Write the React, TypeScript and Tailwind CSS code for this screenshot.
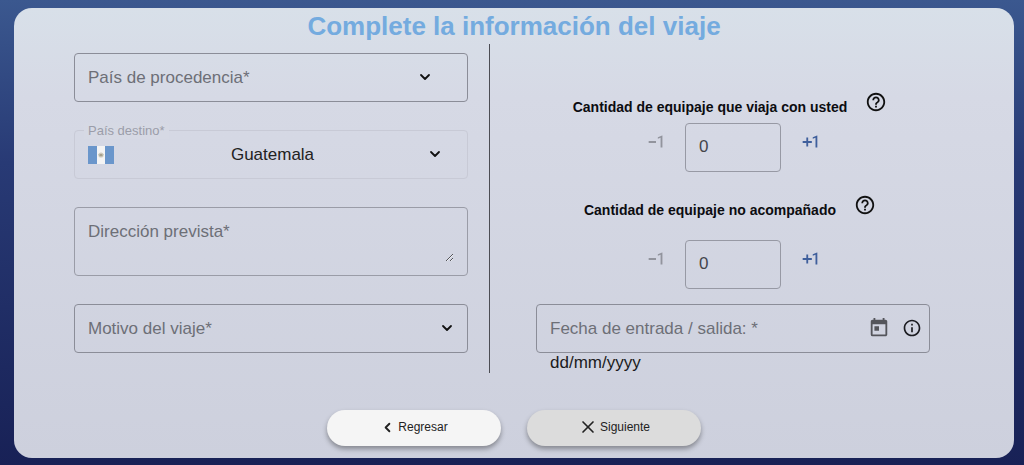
import type { ReactNode } from "react";
import clsx from "clsx";
import { ChevronDown, ChevronLeft, X } from "lucide-react";
import {
  MdExposureNeg1,
  MdExposurePlus1,
  MdHelpOutline,
  MdInfoOutline,
  MdToday,
} from "react-icons/md";

const FlagGuatemala = () => (
  <svg
    width="26"
    height="18"
    viewBox="0 0 26 18"
    className="pointer-events-none absolute top-4 left-[14px]"
  >
    <rect width="26" height="18" fill="#6a96cb" />
    <rect x="9" width="8" height="18" fill="#f4f4f4" />
    <circle cx="13" cy="9" r="2.6" fill="#cfcabd" />
    <path d="M11 8.5a2.2 2.2 0 0 0 4 0" fill="none" stroke="#8f9c86" strokeWidth="1" />
    <rect x="12" y="8" width="2" height="2" fill="#a8a08c" />
  </svg>
);

const Arrow = ({ className }: { className: string }) => (
  <ChevronDown
    size={16}
    strokeWidth={2.7}
    className={clsx("pointer-events-none absolute top-4 text-[#111]", className)}
  />
);

type FieldProps = {
  id: string;
  label: string;
  floating?: boolean;
  children: ReactNode;
};

const Field = ({ id, label, floating, children }: FieldProps) => (
  <div className="relative text-[17px]">
    {children}
    <label
      htmlFor={id}
      className={clsx(
        "pointer-events-none absolute",
        floating
          ? "-top-[7px] left-[10px] bg-[#d6d9e4] px-1 text-[13px] leading-4 text-[#9b9da9]"
          : "top-[13px] left-[14px] leading-6 text-[#6d6f77]"
      )}
    >
      {label}
    </label>
  </div>
);

type StepperProps = {
  id: string;
  label: string;
  className: string;
};

const Stepper = ({ id, label, className }: StepperProps) => (
  <div className={clsx("flex flex-col items-center", className)}>
    <div className="flex items-center">
      <label htmlFor={id} className="pt-2 text-[14px] leading-5 font-bold text-[#0c0c10]">
        {label}
      </label>
      <button type="button" aria-label="Ayuda" className="pr-[6px] pb-[2px] pl-[18px] text-[#111]">
        <MdHelpOutline size={22} />
      </button>
    </div>
    <div className="flex items-start gap-[10px]">
      <button type="button" aria-label="Restar uno" className="p-2 text-[#92949d]">
        <MdExposureNeg1 size={22} />
      </button>
      <input
        id={id}
        type="text"
        defaultValue="0"
        className="h-[49px] w-24 rounded border border-[#9799a4] px-[13px] pb-[2px] text-[17px] text-[#44454b]"
      />
      <button type="button" aria-label="Sumar uno" className="p-2 text-[#3f5f9c]">
        <MdExposurePlus1 size={22} />
      </button>
    </div>
  </div>
);

export default function App() {
  return (
    <main className="min-h-screen bg-linear-to-b from-[#3b588f] via-[#283a75] via-35% to-[#182156] pt-2 pr-[10px] pb-[7px] pl-[14px] font-['Liberation_Sans',Arial,sans-serif]">
      <form className="rounded-[18px] bg-linear-to-b from-[#d8e0e9] via-[#d6d9e5] via-20% to-[#cdd0dd] pb-3">
        <h1 className="text-center text-[26px] leading-9 font-bold text-[#74abdf]">
          Complete la información del viaje
        </h1>
        <div className="grid grid-cols-[475fr_525fr]">
          <div className="flex flex-col gap-7 pt-[9px] pr-[21px] pb-5 pl-[60px]">
            <Field id="origen" label="País de procedencia*">
              <select
                id="origen"
                className="block h-[49px] w-full appearance-none rounded border border-[#8b8d98] px-[13px]"
              />
              <Arrow className="right-[35px]" />
            </Field>
            <Field id="destino" label="País destino*" floating>
              <FlagGuatemala />
              <select
                id="destino"
                disabled
                className="block h-[49px] w-full appearance-none rounded border border-[#c8cad6] pr-[13px] pl-4 text-center text-[#222] opacity-100"
              >
                <option>Guatemala</option>
              </select>
              <Arrow className="right-[25px]" />
            </Field>
            <Field id="direccion" label="Dirección prevista*">
              <div className="h-[69px] rounded border border-[#9a9ca7] px-[13px] pt-3 pb-[13px]">
                <textarea id="direccion" className="block h-full w-full resize-y" />
              </div>
            </Field>
            <Field id="motivo" label="Motivo del viaje*">
              <select
                id="motivo"
                className="block h-[49px] w-full appearance-none rounded border border-[#8b8d98] px-[13px]"
              />
              <Arrow className="right-[13px]" />
            </Field>
          </div>
          <div className="flex flex-col border-l border-[#4c4d54] pr-[84px] pl-[46px]">
            <Stepper
              id="equipaje"
              label="Cantidad de equipaje que viaja con usted"
              className="gap-[6px] pt-[45px]"
            />
            <Stepper
              id="no-acompanado"
              label="Cantidad de equipaje no acompañado"
              className="gap-5 pt-5 pb-[15px]"
            />
            <Field id="fecha" label="Fecha de entrada / salida: *">
              <input
                id="fecha"
                type="text"
                aria-describedby="formato"
                className="block h-[49px] w-full rounded border border-[#8b8d98] px-[13px]"
              />
              <div className="absolute top-[13px] right-2 flex items-center gap-3">
                <button type="button" aria-label="Abrir calendario" className="text-[#54555b]">
                  <MdToday size={22} />
                </button>
                <button type="button" aria-label="Información" className="text-[#1b1b20]">
                  <MdInfoOutline size={20} />
                </button>
              </div>
            </Field>
            <p id="formato" className="pl-[14px] text-[17px] leading-5 text-[#1b1b20]">
              dd/mm/yyyy
            </p>
          </div>
        </div>
        <div className="flex justify-center gap-[26px] pt-[37px]">
          <button
            type="button"
            className="flex h-9 w-[174px] items-center justify-center gap-[3px] rounded-full bg-[#f5f5f5] pb-[2px] text-xs text-[#222] shadow-[0_3px_5px_rgba(0,0,0,0.35)]"
          >
            <ChevronLeft size={15} strokeWidth={3} />
            Regresar
          </button>
          <button
            type="button"
            className="flex h-9 w-[174px] items-center justify-center gap-[2px] rounded-full bg-[#dcdcdc] pb-[2px] text-xs text-[#222] shadow-[0_3px_5px_rgba(0,0,0,0.35)]"
          >
            <X size={20} strokeWidth={2} />
            Siguiente
          </button>
        </div>
      </form>
    </main>
  );
}
